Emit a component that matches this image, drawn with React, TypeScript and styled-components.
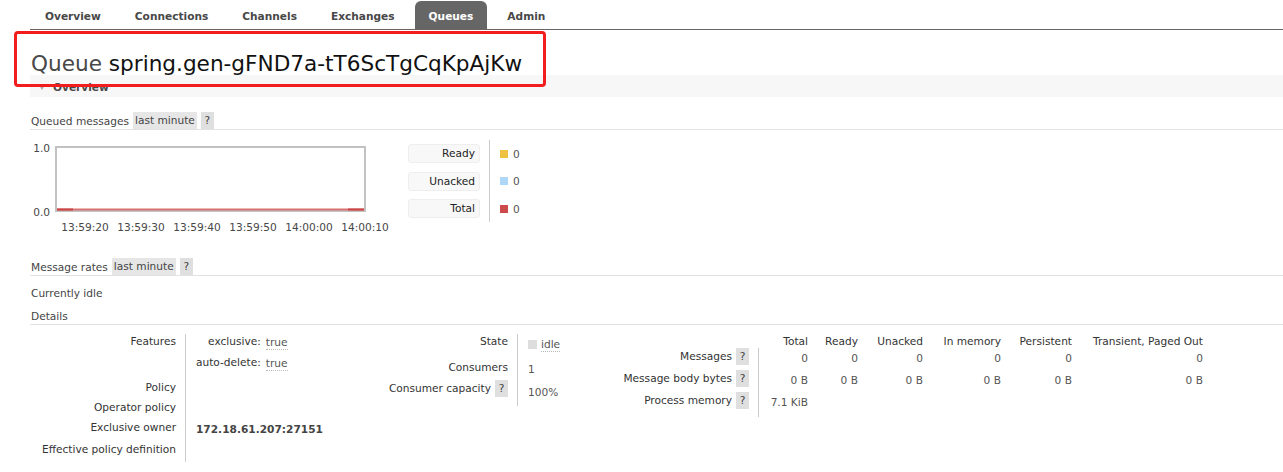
import React from "react";
import styled, { createGlobalStyle } from "styled-components";

const GlobalStyle = createGlobalStyle`
  html, body { margin: 0; padding: 0; background: #fff; }
  body {
    font-family: "DejaVu Sans", Verdana, sans-serif;
    font-size: 10.6px;
    line-height: 14px;
    color: #484848;
  }
  * { box-sizing: border-box; }
`;

const Page = styled.div`
  position: relative;
  width: 1283px;
  height: 472px;
  padding-left: 30px;
  overflow: hidden;
`;

const Nav = styled.ul`
  display: flex;
  gap: 6px;
  margin: 0;
  padding: 1px 0 0 1px;
  list-style: none;
  height: 30px;
  border-bottom: 1px solid #666;
`;

const Tab = styled.li<{ $active?: boolean }>`
  height: 28px;
  padding: 2px 14px 0;
  line-height: 26px;
  font-weight: bold;
  color: ${(p) => (p.$active ? "#fff" : "#484848")};
  background: ${(p) => (p.$active ? "#666" : "transparent")};
  border-radius: 6px 6px 0 0;
`;

const Title = styled.h1`
  margin: 22px 0 0 1px;
  font-size: 21.6px;
  line-height: 23px;
  font-weight: normal;
  color: #484848;
`;

const TitleName = styled.span`
  color: #111;
`;

const Highlight = styled.div`
  position: absolute;
  left: 14px;
  top: 31px;
  width: 532px;
  height: 56px;
  border: 3px solid #f21d1d;
  border-radius: 4px;
  pointer-events: none;
`;

const SectionBar = styled.div`
  display: flex;
  align-items: center;
  height: 22px;
  padding-top: 2px;
  background: #f7f7f7;
  font-weight: bold;
  color: #484848;
`;

const Caret = styled.span`
  width: 0;
  height: 0;
  margin: 0 8px 0 9px;
  border-left: 3px solid transparent;
  border-right: 3px solid transparent;
  border-top: 5px solid #aaa;
`;

const SubHeading = styled.div<{ $mt: number }>`
  display: flex;
  align-items: center;
  gap: 4px;
  height: 18px;
  margin-top: ${(p) => p.$mt}px;
  padding-left: 1px;
  border-bottom: 1px solid #e2e2e2;
  color: #444;
`;

const Pill = styled.span`
  height: 17px;
  line-height: 17px;
  padding: 0 2px;
  background: #e6e6e6;
`;

const Help = styled.span`
  display: inline-block;
  flex: none;
  width: 13px;
  height: 17px;
  line-height: 17px;
  text-align: center;
  background: #dfdfdf;
  color: #444;
`;

const ChartSection = styled.div`
  display: flex;
  align-items: flex-start;
  padding-top: 11px;
`;

const YAxis = styled.div`
  display: flex;
  flex-direction: column;
  justify-content: space-between;
  width: 25px;
  height: 78px;
  padding-right: 5px;
  text-align: right;
`;

const PlotCol = styled.div`
  width: 311px;
  margin-top: 5px;
`;

const TimeRow = styled.div`
  display: flex;
  width: 336px;
  margin: 5px 0 0 2px;
`;

const TimeLabel = styled.span`
  flex: none;
  width: 56px;
  text-align: center;
`;

const Legend = styled.div`
  display: flex;
  margin-left: 42px;
`;

const LegendLabels = styled.div`
  display: flex;
  flex-direction: column;
  gap: 8.5px;
  width: 72px;
  padding-top: 3px;
`;

const LegendLabel = styled.div`
  height: 19px;
  line-height: 17px;
  padding-right: 4px;
  text-align: right;
  background: #f8f8f8;
  border: 1px solid #eee;
  border-radius: 3px;
  color: #222;
`;

const LegendDivider = styled.div`
  width: 1px;
  height: 82px;
  margin: -1px 0 0 9px;
  background: #ccc;
`;

const LegendValues = styled.div`
  display: flex;
  flex-direction: column;
  gap: 8.5px;
  padding: 3px 0 0 10px;
`;

const LegendValue = styled.div`
  display: flex;
  align-items: center;
  gap: 5px;
  height: 19px;
  color: #555;
`;

const Swatch = styled.span<{ $color: string }>`
  width: 8px;
  height: 8px;
  background: ${(p) => p.$color};
`;

const Plain = styled.div<{ $mt: number }>`
  margin-top: ${(p) => p.$mt}px;
  padding-left: 1px;
  color: #444;
`;

const DetailsRow = styled.div`
  display: flex;
  align-items: flex-start;
  margin-top: 9px;
`;

const KeyTable = styled.div<{ $cols: string; $rows: string }>`
  display: grid;
  grid-template-columns: ${(p) => p.$cols};
  grid-template-rows: ${(p) => p.$rows};
`;

const Th = styled.div<{ $pt?: number }>`
  display: flex;
  justify-content: flex-end;
  align-items: flex-start;
  gap: 4px;
  padding: ${(p) => p.$pt ?? 0}px 9px 0 0;
  color: #333;
  white-space: nowrap;
`;

const HelpLabel = styled.span`
  line-height: 17px;
`;

const Td = styled.div<{ $pt?: number }>`
  padding: ${(p) => p.$pt ?? 0}px 0 0 10px;
  border-left: 1px solid #ccc;
  color: #555;
  white-space: nowrap;
`;

const ColHead = styled.div`
  text-align: right;
  color: #333;
  white-space: nowrap;
`;

const NumCell = styled.div<{ $first?: boolean }>`
  padding-top: 3px;
  text-align: right;
  color: #555;
  white-space: nowrap;
  border-left: ${(p) => (p.$first ? "1px solid #ccc" : "none")};
`;

const FeatureGrid = styled.div`
  display: grid;
  grid-template-columns: auto auto;
  justify-content: start;
  column-gap: 5px;
  row-gap: 5px;
`;

const FeatureKey = styled.span`
  text-align: right;
  color: #333;
`;

const Dotted = styled.span`
  justify-self: start;
  align-self: start;
  margin-top: 2px;
  line-height: 13px;
  border-bottom: 1px dotted #bbb;
  color: #555;
`;

const Owner = styled.span`
  display: inline-block;
  padding-top: 2px;
  font-weight: bold;
  color: #444;
`;

const StateValue = styled.div`
  display: flex;
  align-items: center;
  gap: 4px;
`;

const StateBox = styled.span`
  width: 9px;
  height: 9px;
  background: #ddd;
`;

const Plot = () => (
  <svg width="311" height="66" viewBox="0 0 311 66">
    <rect x="1" y="1" width="309" height="64" fill="#fff" stroke="#c2c2c2" strokeWidth="2" />
    <line x1="2" y1="63.5" x2="309" y2="63.5" stroke="#d77070" strokeWidth="2" />
    <line x1="2" y1="63.5" x2="18" y2="63.5" stroke="#c94444" strokeWidth="2" />
    <line x1="293" y1="63.5" x2="309" y2="63.5" stroke="#c94444" strokeWidth="2" />
  </svg>
);

const tabs = ["Overview", "Connections", "Channels", "Exchanges", "Queues", "Admin"];
const times = ["13:59:20", "13:59:30", "13:59:40", "13:59:50", "14:00:00", "14:00:10"];
const legend = [
  { label: "Ready", color: "#edc240" },
  { label: "Unacked", color: "#afd8f8" },
  { label: "Total", color: "#cb4b4b" },
];
const heads = ["Total", "Ready", "Unacked", "In memory", "Persistent", "Transient, Paged Out"];
const msgRows = [
  { label: "Messages", values: ["0", "0", "0", "0", "0", "0"] },
  { label: "Message body bytes", values: ["0 B", "0 B", "0 B", "0 B", "0 B", "0 B"] },
  { label: "Process memory", values: ["7.1 KiB", "", "", "", "", ""] },
];

export default function App() {
  return (
    <>
      <GlobalStyle />
      <Page>
        <Nav>
          {tabs.map((t) => (
            <Tab key={t} $active={t === "Queues"}>
              {t}
            </Tab>
          ))}
        </Nav>

        <Title>
          Queue <TitleName>spring.gen-gFND7a-tT6ScTgCqKpAjKw</TitleName>
        </Title>

        <SectionBar>
          <Caret />
          Overview
        </SectionBar>

        <SubHeading $mt={15}>
          Queued messages <Pill>last minute</Pill>
          <Help>?</Help>
        </SubHeading>

        <ChartSection>
          <YAxis>
            <span>1.0</span>
            <span>0.0</span>
          </YAxis>
          <PlotCol>
            <Plot />
            <TimeRow>
              {times.map((t) => (
                <TimeLabel key={t}>{t}</TimeLabel>
              ))}
            </TimeRow>
          </PlotCol>
          <Legend>
            <LegendLabels>
              {legend.map((l) => (
                <LegendLabel key={l.label}>{l.label}</LegendLabel>
              ))}
            </LegendLabels>
            <LegendDivider />
            <LegendValues>
              {legend.map((l) => (
                <LegendValue key={l.label}>
                  <Swatch $color={l.color} />0
                </LegendValue>
              ))}
            </LegendValues>
          </Legend>
        </ChartSection>

        <SubHeading $mt={24}>
          Message rates <Pill>last minute</Pill>
          <Help>?</Help>
        </SubHeading>

        <Plain $mt={10}>Currently idle</Plain>

        <SubHeading $mt={7}>Details</SubHeading>

        <DetailsRow>
          <KeyTable $cols="155px 195px" $rows="44px 20px 20px 20px 24px">
            <Th>Features</Th>
            <Td>
              <FeatureGrid>
                <FeatureKey>exclusive:</FeatureKey>
                <Dotted>true</Dotted>
                <FeatureKey>auto-delete:</FeatureKey>
                <Dotted>true</Dotted>
              </FeatureGrid>
            </Td>
            <Th $pt={2}>Policy</Th>
            <Td />
            <Th $pt={2}>Operator policy</Th>
            <Td />
            <Th $pt={2}>Exclusive owner</Th>
            <Td $pt={2}>
              <Owner>172.18.61.207:27151</Owner>
            </Td>
            <Th $pt={4}>Effective policy definition</Th>
            <Td />
          </KeyTable>

          <KeyTable $cols="137px 95px" $rows="22px 22px 28px">
            <Th>State</Th>
            <Td $pt={2}>
              <StateValue>
                <StateBox />
                <Dotted>idle</Dotted>
              </StateValue>
            </Td>
            <Th $pt={4}>Consumers</Th>
            <Td $pt={6}>1</Td>
            <Th $pt={2}>
              <HelpLabel>Consumer capacity</HelpLabel>
              <Help>?</Help>
            </Th>
            <Td $pt={7}>100%</Td>
          </KeyTable>

          <KeyTable
            $cols="146px 50px 50px 65px 78px 71px 131px"
            $rows="14px 22px 22px 25px"
          >
            <div />
            {heads.map((h) => (
              <ColHead key={h}>{h}</ColHead>
            ))}
            {msgRows.map((r) => (
              <React.Fragment key={r.label}>
                <Th>
                  <HelpLabel>{r.label}</HelpLabel>
                  <Help>?</Help>
                </Th>
                {r.values.map((v, i) => (
                  <NumCell key={i} $first={i === 0}>
                    {v}
                  </NumCell>
                ))}
              </React.Fragment>
            ))}
          </KeyTable>
        </DetailsRow>

        <Highlight />
      </Page>
    </>
  );
}
